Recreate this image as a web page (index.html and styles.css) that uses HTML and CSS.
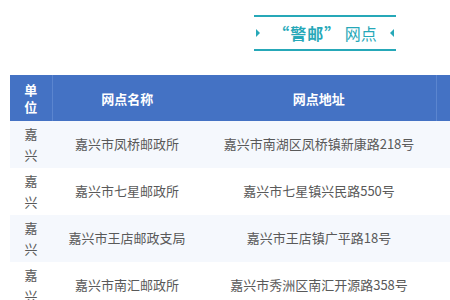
FILE: index.html
```html
<!DOCTYPE html>
<html lang="zh-CN">
<head>
<meta charset="utf-8">
<link rel="stylesheet" href="styles.css">
</head>
<body>
<div class="page">
  <div class="title-wrap">
    <div class="title">
      <span class="tri tri-right"></span>
      <span class="title-text"><b>“警邮”</b> 网点</span>
      <span class="tri tri-left"></span>
    </div>
  </div>
  <table class="grid">
    <colgroup>
      <col class="c1"><col class="c2"><col class="c3"><col class="c4">
    </colgroup>
    <thead>
      <tr><th class="sep">单<br>位</th><th>网点名称</th><th class="sep">网点地址</th><th></th></tr>
    </thead>
    <tbody>
      <tr class="alt"><td>嘉<br>兴</td><td>嘉兴市凤桥邮政所</td><td>嘉兴市南湖区凤桥镇新康路218号</td><td></td></tr>
      <tr><td>嘉<br>兴</td><td>嘉兴市七星邮政所</td><td>嘉兴市七星镇兴民路550号</td><td></td></tr>
      <tr class="alt"><td>嘉<br>兴</td><td>嘉兴市王店邮政支局</td><td>嘉兴市王店镇广平路18号</td><td></td></tr>
      <tr><td>嘉<br>兴</td><td>嘉兴市南汇邮政所</td><td>嘉兴市秀洲区南汇开源路358号</td><td></td></tr>
    </tbody>
  </table>
</div>
</body>
</html>
```
FILE: styles.css
```css
html, body {
  margin: 0;
  background: #ffffff;
  overflow: hidden;
}
body {
  font-family: "Noto Sans CJK SC", "Noto Sans", sans-serif;
}
.page {
  width: 630px;
  padding: 15px 0 0 10px;
}
.title-wrap {
  display: flex;
  justify-content: center;
}
.title {
  width: 138px;
  height: 32px;
  border-top: 2px solid #26a8b8;
  border-bottom: 2px solid #26a8b8;
  display: flex;
  align-items: center;
  justify-content: space-between;
  padding: 0 2px;
  box-sizing: content-box;
}
.tri {
  width: 0;
  height: 0;
  border-top: 4px solid transparent;
  border-bottom: 4px solid transparent;
}
.tri-right { border-left: 4px solid #26a8b8; }
.tri-left { border-right: 4px solid #26a8b8; }
.title-text {
  font-size: 16px;
  line-height: 20px;
  color: #26a8b8;
  white-space: nowrap;
}
.title-text b {
  font-weight: 700;
  letter-spacing: 1px;
  word-spacing: 2px;
  font-feature-settings: "fwid" 1;
}
.grid {
  margin-top: 24px;
  width: 630px;
  border-collapse: collapse;
  table-layout: fixed;
}
.c1 { width: 42px; }
.c2 { width: 150px; }
.c3 { width: 234px; }
.c4 { width: 204px; }
.grid th {
  background: #4472c4;
  color: #ffffff;
  font-size: 13px;
  font-weight: 700;
  line-height: 17px;
  padding: 6px 0;
  text-align: center;
}
.grid th.sep { border-right: 1px solid #5b85cf; }
.grid td {
  color: #595959;
  font-size: 13px;
  line-height: 20.5px;
  padding: 3px 0;
  text-align: center;
}
.grid tr.alt td { background: #f5f8fd; }
```
